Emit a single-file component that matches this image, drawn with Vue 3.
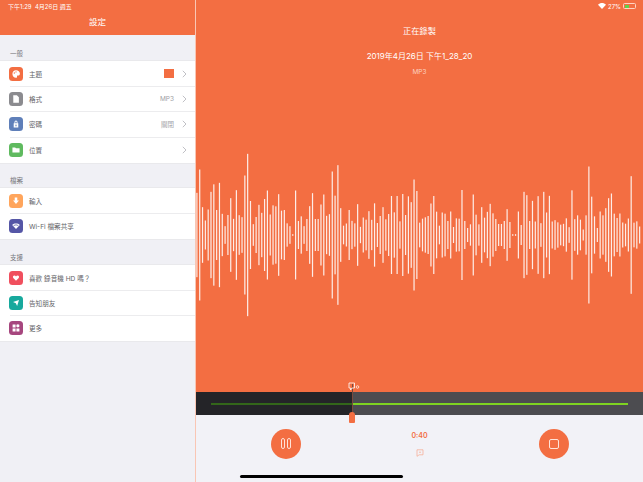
<template>
  <div class="screen">
    <aside class="settings">
      <header class="side-head">
        <div class="status-left">下午1:29&nbsp;&nbsp;4月26日 週五</div>
        <h1>設定</h1>
      </header>
      <section v-for="group in groups" :key="group.title" class="group">
        <div class="group-title">{{ group.title }}</div>
        <ul>
          <li v-for="row in group.rows" :key="row.label" class="row">
            <span class="icon" :class="row.cls">
              <svg viewBox="0 0 14 14" width="14" height="14"><path :d="row.icon" fill="#fff" fill-rule="evenodd" /></svg>
            </span>
            <span class="label">{{ row.label }}</span>
            <span v-if="row.swatch" class="swatch"></span>
            <span v-if="row.value" class="value">{{ row.value }}</span>
            <svg v-if="row.arrow" class="chevron" viewBox="0 0 5 8" width="5" height="8"><path d="M.8.8 4 4 .8 7.2" fill="none" stroke="#b9b9be" stroke-width=".9" /></svg>
          </li>
        </ul>
      </section>
    </aside>

    <main class="recorder">
      <div class="stage">
        <div class="status-right">
          <svg viewBox="0 0 12 9" width="8" height="6"><path d="M6 9 0 2.700C3.400-.9 8.600-.9 12 2.700Z" fill="#fff" /></svg>
          <span>27%</span>
          <span class="battery"><i></i></span>
        </div>
        <h2>正在錄製</h2>
        <div class="file-name">2019年4月26日 下午1_28_20</div>
        <div class="file-type">MP3</div>
        <svg class="wave" viewBox="0 0 448 170" width="448" height="170">
          <rect v-for="(h, i) in bars" :key="i" :x="0.3 + i * 2.82" :y="85 - h / 2" width="1.2" :height="h" fill="#fff" fill-opacity=".88" />
        </svg>
      </div>

      <div class="timeline">
        <div class="played"><span class="track"></span></div>
        <div class="rest"><span class="track"></span></div>
        <div class="playhead">
          <svg class="flag" viewBox="0 0 12 10" width="12" height="10"><path d="M1 1h5.500v5H4L2.600 8V6H1Z" fill="none" stroke="#fff" stroke-width=".8" /><circle cx="9.500" cy="5" r="1.300" fill="none" stroke="#fff" stroke-width=".7" /></svg>
          <span class="handle"></span>
        </div>
      </div>

      <div class="controls">
        <button class="round"><span class="pause"><i></i><i></i></span></button>
        <div class="center">
          <div class="time">0:40</div>
          <svg viewBox="0 0 8 8" width="8" height="8"><path d="M1 .8h6v5H3.200L1 7.300Z" fill="none" stroke="#f8a78c" stroke-width=".7" /><circle cx="4" cy="3.300" r=".7" fill="#f8a78c" /></svg>
        </div>
        <button class="round"><span class="stop"></span></button>
        <span class="home-bar"></span>
      </div>
    </main>
  </div>
</template>

<script setup>
const icons = {
  palette: 'M7 2.600c2.600 0 4.600 1.800 4.600 4 0 1.600-1.200 2.200-2.300 2.200-.9 0-1.300.4-1.100 1 .2.800-.3 1.600-1.200 1.600-2.400 0-4.200-2-4.200-4.400S4.500 2.600 7 2.600ZM5 5a.8.8 0 1 0 0 1.600A.8.8 0 0 0 5 5Zm2-1.200a.7.7 0 1 0 0 1.400.7.7 0 0 0 0-1.400Z',
  doc: 'M3.800 2.500H8L10.400 5v6.500H3.800Z',
  lock: 'M5.200 6V4.800a1.800 1.800 0 0 1 3.600 0V6h.9v5H4.300V6Zm1 0h1.600V4.800a.8.8 0 0 0-1.600 0ZM7 7.500a.8.8 0 0 0-.4 1.500v1h.8V9A.8.8 0 0 0 7 7.500Z',
  folder: 'M2.800 4h3.200l1 1h4.200v5H2.800Z',
  down: 'M5.500 3h3v3.500h2L7 10.500 3.500 6.500h2Z',
  wifi: 'M7 10.500 2.500 5.800C5 3.600 9 3.600 11.500 5.800ZM4 6.200 4.500 6.800C6 5.700 8 5.700 9.500 6.800L10 6.200C8.200 4.900 5.800 4.900 4 6.200Z',
  heart: 'M7 10.200 3.800 7C2.900 5.700 3.700 4.200 5.100 4.200c.8 0 1.500.4 1.900 1 .4-.6 1.100-1 1.900-1 1.400 0 2.200 1.500 1.300 2.800Z',
  plane: 'M10.500 3.500 8.300 10.500 6.800 7.200 3.500 5.700Z',
  grid: 'M3 3h3.500v3.500H3Zm4.500.2 1.700-.7 1.700.7v2.300l-1.700.9-1.700-.9ZM3 7.500h3.500V11H3Zm4.500 0H11V11H7.500Z',
}

const groups = [
  {
    title: '一般',
    rows: [
      { label: '主題', cls: 'c-theme', icon: icons.palette, swatch: true, arrow: true },
      { label: '格式', cls: 'c-format', icon: icons.doc, value: 'MP3', arrow: true },
      { label: '密碼', cls: 'c-lock', icon: icons.lock, value: '關閉', arrow: true },
      { label: '位置', cls: 'c-folder', icon: icons.folder, arrow: true },
    ],
  },
  {
    title: '檔案',
    rows: [
      { label: '輸入', cls: 'c-import', icon: icons.down },
      { label: 'Wi-Fi 檔案共享', cls: 'c-wifi', icon: icons.wifi },
    ],
  },
  {
    title: '支援',
    rows: [
      { label: '喜歡 錄音機 HD 嗎？', cls: 'c-heart', icon: icons.heart },
      { label: '告知朋友', cls: 'c-plane', icon: icons.plane },
      { label: '更多', cls: 'c-more', icon: icons.grid },
    ],
  },
]

// bar heights read off the 3x crops, so divided by 3 below
const bars = [
  253, 393, 167, 87, 153, 259, 304, 150, 313, 127, 53, 120, 221, 97, 269, 119, 107, 357, 487, 204, 65, 108, 181, 133,
  216, 267, 123, 178, 172, 245, 146, 150, 70, 53, 5, 267, 84, 112, 53, 96, 173, 251, 96, 96, 183, 243, 115, 125, 381,
  236, 419, 161, 56, 69, 150, 85, 70, 185, 49, 105, 92, 143, 91, 190, 72, 114, 167, 94, 126, 234, 136, 234, 82, 246,
  120, 232, 197, 333, 264, 74, 98, 106, 114, 189, 234, 140, 56, 135, 128, 84, 141, 48, 100, 98, 270, 84, 42, 64, 243,
  122, 64, 167, 104, 139, 187, 130, 96, 66, 66, 84, 155, 78, 5, 5, 141, 60, 259, 239, 84, 205, 81, 233, 71, 259, 135,
  235, 81, 89, 76, 62, 67, 100, 47, 268, 95, 118, 92, 33, 118, 411, 230, 112, 42, 141, 118, 161, 221, 249, 128, 102,
  129, 75, 68, 99, 353, 74, 82, 51,
].map((h) => h / 3)
</script>

<style scoped>
.screen {
  display: flex;
  width: 643px;
  height: 482px;
  overflow: hidden;
  font-family: Inter, 'Noto Sans CJK TC', sans-serif;
  background: #f2f2f7;
}
.settings {
  width: 195px;
  flex: none;
  background: #f0f0f5;
}
.side-head {
  height: 35px;
  background: #f36e42;
  color: #fff;
  text-align: center;
}
.status-left {
  padding: 2px 0 0 8px;
  height: 9px;
  line-height: 9px;
  font-size: 6px;
  text-align: left;
}
h1 {
  margin: 0;
  padding-top: 5px;
  font-size: 8.500px;
  line-height: 13px;
  font-weight: 400;
}
.group-title {
  display: flex;
  align-items: flex-end;
  height: 25.500px;
  padding: 0 0 2px 10px;
  box-sizing: border-box;
  font-size: 6.500px;
  line-height: 10px;
  color: #77777c;
}
.group:first-of-type .group-title {
  height: 26px;
}
.group:last-of-type .group-title {
  height: 26px;
}
ul {
  margin: 0;
  padding: 0;
  list-style: none;
  background: #fff;
  box-shadow: 0 -1px #e9e9ec, 0 1px #e9e9ec;
}
.row {
  position: relative;
  display: flex;
  align-items: center;
  height: 25.400px;
  padding: 0 8px 0 8.500px;
  font-size: 6.600px;
  color: #646468;
}
.row + .row::before {
  content: '';
  position: absolute;
  top: -0.500px;
  left: 10px;
  right: 0;
  height: 1px;
  background: #ececee;
}
.icon {
  display: flex;
  width: 14px;
  height: 14px;
  margin-right: 6.500px;
  border-radius: 3.500px;
}
.icon svg {
  transform: scale(.85);
}
.c-theme { background: #f36e42; }
.c-format { background: #8b8b8f; }
.c-lock { background: #5f7fb9; }
.c-folder { background: #5fba5f; }
.c-import { background: #ffa55c; }
.c-wifi { background: #5556a6; }
.c-heart { background: #f04f5e; }
.c-plane { background: #17a99d; }
.c-more { background: #a6467e; }
.label {
  flex: 1;
}
.swatch {
  width: 10px;
  height: 9px;
  background: #f36e42;
}
.value {
  color: #a0a0a5;
  font-size: 6.500px;
}
.chevron {
  margin-left: 8px;
}
.recorder {
  flex: 1;
  display: flex;
  flex-direction: column;
  position: relative;
  min-width: 0;
  border-left: 1px solid #f9c6b4;
}
.stage {
  height: 392px;
  background: #f36e42;
  color: #fff;
  text-align: center;
}
.status-right {
  display: flex;
  justify-content: flex-end;
  align-items: center;
  gap: 2px;
  height: 12px;
  padding-right: 7px;
  font-size: 6px;
}
.battery {
  display: block;
  width: 13px;
  height: 6px;
  padding: .5px;
  box-sizing: border-box;
  border: .5px solid #ffd3c2;
  border-radius: 1.500px;
}
.battery i {
  display: block;
  width: 4px;
  height: 100%;
  background: #5fd34a;
}
h2 {
  margin: 0;
  padding-top: 13px;
  font-size: 8.200px;
  line-height: 13px;
  font-weight: 400;
}
.file-name {
  margin-top: 12px;
  font-size: 8px;
  line-height: 13px;
}
.file-type {
  margin-top: 5px;
  font-size: 6.500px;
  line-height: 9px;
  color: #fcd0c0;
}
.wave {
  display: block;
  margin: 73px 0 0 0;
}
.timeline {
  position: relative;
  z-index: 1;
  display: flex;
  height: 23px;
  flex: none;
  background: #4c4c50;
}
.played {
  width: 156px;
  background: #242428;
  position: relative;
}
.rest {
  flex: 1;
  position: relative;
}
.track {
  position: absolute;
  top: 11px;
  height: 2px;
}
.played .track {
  left: 15px;
  right: 0;
  background: #33661a;
}
.rest .track {
  left: 0;
  right: 15px;
  background: #7ed321;
}
.playhead {
  position: absolute;
  left: 155.500px;
  top: -8px;
  width: 1px;
  height: 38px;
  background: #7a4a3c;
}
.flag {
  position: absolute;
  left: -4px;
  top: -2px;
}
.handle {
  position: absolute;
  left: -2.500px;
  bottom: -1px;
  width: 6px;
  height: 11px;
  background: #f36e42;
  border-radius: 3px 3px 1px 1px;
}
.controls {
  position: relative;
  flex: 1;
  display: flex;
  justify-content: center;
  align-items: flex-start;
  gap: 104px;
  padding-top: 13.500px;
  box-sizing: border-box;
  background: #f2f2f7;
}
.round {
  display: flex;
  align-items: center;
  justify-content: center;
  width: 30px;
  height: 30px;
  padding: 0;
  border: 0;
  border-radius: 50%;
  background: #f36e42;
}
.pause {
  display: flex;
  gap: 2px;
}
.pause i {
  width: 4px;
  height: 11px;
  border: .7px solid #ffe3d8;
  border-radius: 2px;
  box-sizing: border-box;
}
.stop {
  width: 10px;
  height: 10px;
  box-sizing: border-box;
  border: 1px solid #ffe3d8;
  border-radius: 2px;
}
.center {
  width: 30px;
  text-align: center;
  padding-top: 1px;
}
.center svg {
  display: block;
  margin: 8px auto 0;
}
.time {
  font-size: 7px;
  line-height: 11px;
  font-weight: 600;
  color: #f36e42;
}
.home-bar {
  position: absolute;
  left: 44px;
  bottom: 4px;
  width: 163px;
  height: 3px;
  border-radius: 2px;
  background: #000;
}
</style>
